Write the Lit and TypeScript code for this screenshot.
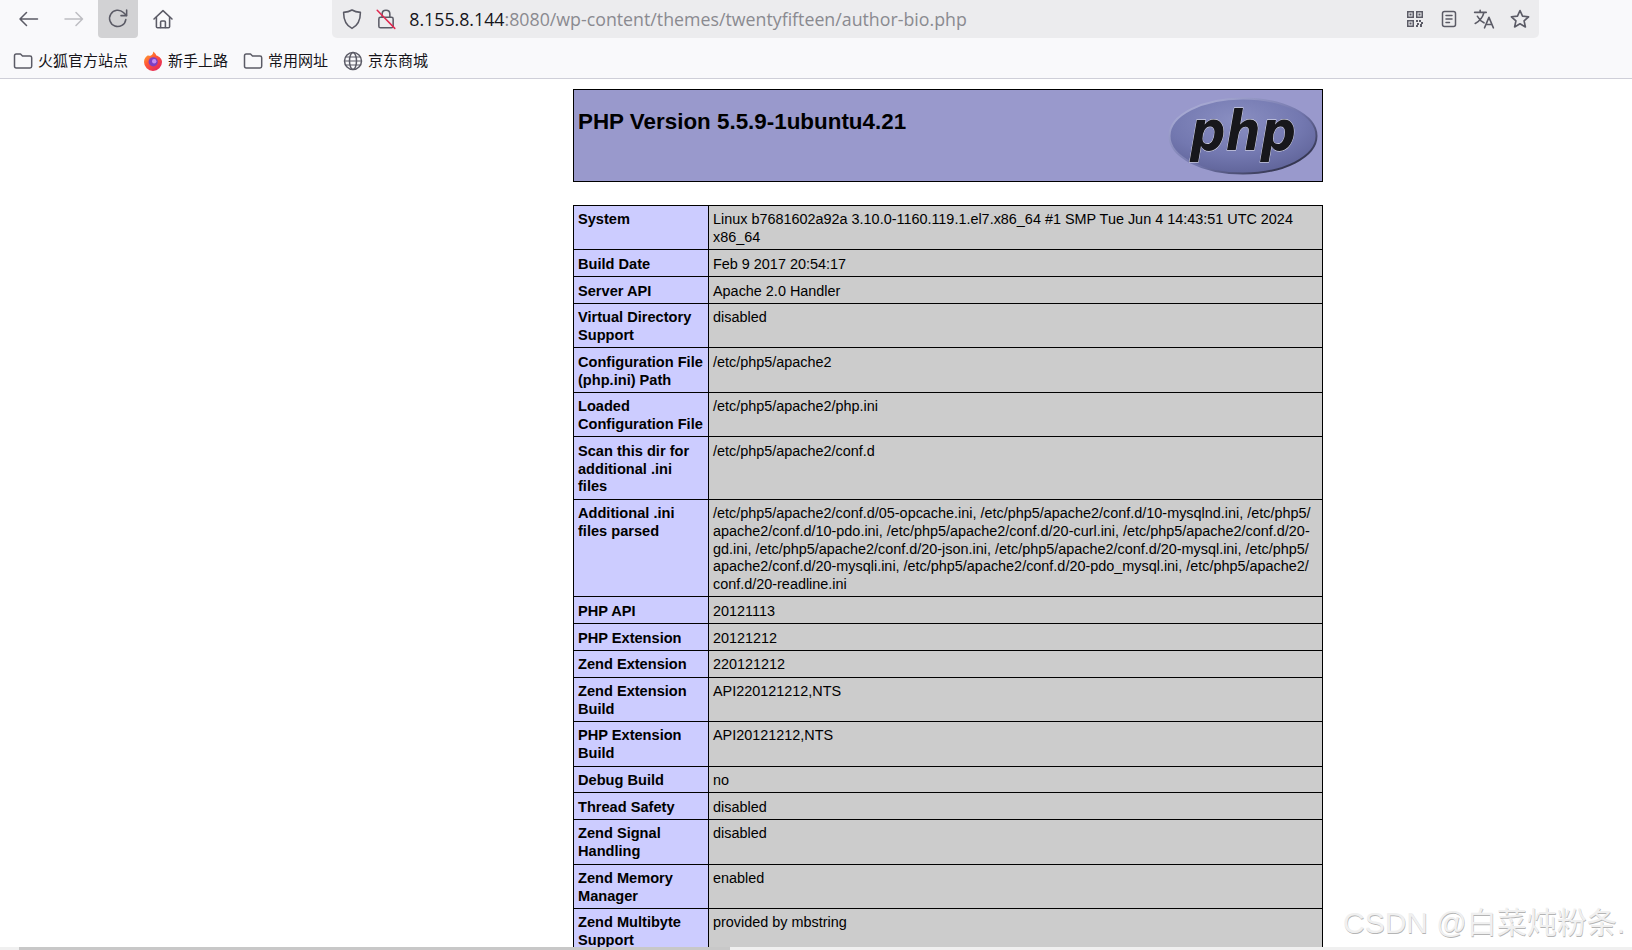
import { LitElement, html, css, svg } from "lit";
import { customElement } from "lit/decorators.js";

const rows: [string, string][] = [
  ["System", "Linux b7681602a92a 3.10.0-1160.119.1.el7.x86_64 #1 SMP Tue Jun 4 14:43:51 UTC 2024\nx86_64"],
  ["Build Date", "Feb 9 2017 20:54:17"],
  ["Server API", "Apache 2.0 Handler"],
  ["Virtual Directory Support", "disabled"],
  ["Configuration File (php.ini) Path", "/etc/php5/apache2"],
  ["Loaded Configuration File", "/etc/php5/apache2/php.ini"],
  ["Scan this dir for additional .ini files", "/etc/php5/apache2/conf.d"],
  ["Additional .ini files parsed", "/etc/php5/apache2/conf.d/05-opcache.ini, /etc/php5/apache2/conf.d/10-mysqlnd.ini, /etc/php5/\napache2/conf.d/10-pdo.ini, /etc/php5/apache2/conf.d/20-curl.ini, /etc/php5/apache2/conf.d/20-\ngd.ini, /etc/php5/apache2/conf.d/20-json.ini, /etc/php5/apache2/conf.d/20-mysql.ini, /etc/php5/\napache2/conf.d/20-mysqli.ini, /etc/php5/apache2/conf.d/20-pdo_mysql.ini, /etc/php5/apache2/\nconf.d/20-readline.ini"],
  ["PHP API", "20121113"],
  ["PHP Extension", "20121212"],
  ["Zend Extension", "220121212"],
  ["Zend Extension Build", "API220121212,NTS"],
  ["PHP Extension Build", "API20121212,NTS"],
  ["Debug Build", "no"],
  ["Thread Safety", "disabled"],
  ["Zend Signal Handling", "disabled"],
  ["Zend Memory Manager", "enabled"],
  ["Zend Multibyte Support", "provided by mbstring"],
];

const ic = (body: unknown, size = 20, sw = 1.5) => html`<svg class="ic" width=${size} height=${size} viewBox="0 0 20 20" fill="none" stroke="#5b5b66" stroke-width=${sw} stroke-linecap="round" stroke-linejoin="round">${body}</svg>`;
const folder = svg`<path d="M1.5 4.8C1.5 3.6 2.3 3 3.3 3H7.5L9.5 5H17C18 5 18.7 5.7 18.7 6.7V15.3C18.7 16.3 18 17 17 17H3.3C2.3 17 1.5 16.3 1.5 15.3Z"/>`;

@customElement("app-root")
export class AppRoot extends LitElement {
  static styles = css`
    :host { display: flex; flex-direction: column; width: 1632px; height: 950px; overflow: hidden; position: relative; background: #fff; font-family: "Liberation Sans", Arial, sans-serif; }
    .toolbar { flex: none; height: 38px; background: #f9f9fb; display: flex; align-items: center; padding-left: 9px; }
    .btn { flex: none; width: 40px; height: 38px; margin-right: 4.7px; display: flex; align-items: center; justify-content: center; border-radius: 0 0 4px 4px; }
    .btn.active { background: #d2d2d4; }
    .ic { display: block; flex: none; }
    .url { flex: none; margin-left: 144px; width: 1207px; height: 38px; background: #ececee; border-radius: 0 0 5px 5px; display: flex; align-items: center; position: relative; }
    .shield { margin-left: 8px; }
    .lock { margin-left: 11.5px; }
    .urltext { margin-left: 12px; font: 17.77px "Open Sans", "Noto Sans", sans-serif; color: #8a8a90; white-space: nowrap; }
    .urltext b { font-weight: 400; color: #15141a; }
    .actions { position: absolute; right: 8px; top: 0; height: 38px; display: flex; align-items: center; gap: 14px; }
    .bookmarks { flex: none; height: 41px; box-sizing: border-box; background: #f9f9fb; border-bottom: 1px solid #cfcfd8; display: flex; align-items: center; padding: 5px 0 0 13px; }
    .bm { display: flex; align-items: center; gap: 5px; margin-right: 15px; font: 15px "Noto Sans CJK SC", sans-serif; color: #15141a; white-space: nowrap; }
    .bm span { padding-bottom: 3px; }
    .page { flex: 1; min-height: 0; overflow: hidden; padding: 10px 0 0 573px; }
    .head { box-sizing: border-box; width: 750px; height: 93px; background: #9999cc; border: 1px solid #000; display: flex; justify-content: space-between; padding: 0 4px 0 4px; }
    h1 { margin: 0; padding-top: 18px; font: bold 22.4px/27px "Liberation Sans", Arial, sans-serif; color: #000; }
    .logo { margin-top: 5.5px; }
    table { border-collapse: collapse; width: 750px; table-layout: fixed; margin-top: 23px; font-size: 14.42px; line-height: 17.75px; color: #000; }
    col.c1 { width: 135px; }
    td { border: 1px solid #000; padding: 5.4px 4px 2.6px; vertical-align: top; background: #cccccc; white-space: pre-line; }
    td.e { background: #ccccff; font-weight: bold; font-size: 14.6px; }
    .scroll { flex: none; height: 3px; background: #f0f0f0; display: flex; }
    .scroll i { display: block; margin-left: 19px; width: 711px; background: #c8c8c8; }
    .wm { position: absolute; left: 1343px; top: 904px; font: 30px/38px "Liberation Sans", "Noto Sans CJK SC", sans-serif; color: #f0f0f0; text-shadow: 0.5px 0.5px 0.5px #b4b4b4; white-space: nowrap; }
  `;

  render() {
    return html`
      <div class="toolbar">
        <div class="btn">${ic(svg`<path d="M18.5 10H1M7.5 3.5L1 10L7.5 16.5"/>`)}</div>
        <div class="btn"><svg class="ic" width="20" height="20" viewBox="0 0 20 20" fill="none" stroke="#bdbdc2" stroke-width="1.5" stroke-linecap="round" stroke-linejoin="round"><path d="M1 10H18.5M12 3.5L18.5 10L12 16.5"/></svg></div>
        <div class="btn active">${ic(svg`<path d="M16.5 10.5A6.8 6.8 0 1 1 14.5 4.6L17 7"/><path d="M17.2 2.5V7.2H12.5"/>`, 24, 1.3)}</div>
        <div class="btn">${ic(svg`<path d="M2.5 10L10 3L17.5 10"/><path d="M4.5 8.5V16.5C4.5 17 5 17.3 5.5 17.3H14.5C15 17.3 15.5 17 15.5 16.5V8.5"/><path d="M8 17V12.5C8 12 8.4 11.7 9 11.7H11C11.6 11.7 12 12 12 12.5V17"/>`, 24, 1.3)}</div>
        <div class="url">
          <span class="shield">${ic(svg`<path d="M10 2.5C12 3.8 14.5 4.4 17 4.5C17 10 15.5 15 10 17.8C4.5 15 3 10 3 4.5C5.5 4.4 8 3.8 10 2.5Z"/>`, 24, 1.3)}</span>
          <span class="lock"><svg class="ic" width="22" height="22" viewBox="0 0 20 20" fill="none" stroke="#5b5b66" stroke-width="1.4" stroke-linecap="round"><rect x="3.5" y="8.5" width="13" height="9.5" rx="1.5"/><path d="M6.5 8.5V5.5C6.5 1 13.5 1 13.5 5.5V8.5"/><path d="M2 2L18 18.5" stroke="#e22850"/></svg></span>
          <span class="urltext"><b>8.155.8.144</b>:8080/wp-content/themes/twentyfifteen/author-bio.php</span>
          <div class="actions">
            <svg class="ic" width="20" height="20" viewBox="0 0 20 20" fill="#5b5b66"><path fill-rule="evenodd" d="M2 2H9V9H2ZM3.5 3.5V7.5H7.5V3.5ZM11 2H18V9H11ZM12.5 3.5V7.5H16.5V3.5ZM2 11H9V18H2ZM3.5 12.5V16.5H7.5V12.5Z"/><path d="M4.5 4.5H6.5V6.5H4.5ZM13.5 4.5H15.5V6.5H13.5ZM4.5 13.5H6.5V15.5H4.5ZM11 11H13V13H11ZM14 11H16V13H14ZM16 13H18V15H16ZM12 14H14V16H12ZM15 15H17V18H15ZM11 16H13V18H11Z"/></svg>
            ${ic(svg`<rect x="3.5" y="2.5" width="13" height="15" rx="2"/><path d="M7 6.5H13M7 10H13M7 13.5H10.5"/>`)}
            ${ic(svg`<path d="M1.5 4H12M6.5 2V4M10 4C9 8 6 12 2 14M4 7.5C5.5 10.5 8 12.5 10 13.5M10.5 18L14.5 8.5L18.5 18M12 15H17"/>`, 22)}
            ${ic(svg`<path d="M10 2.3L12.3 7.4L17.8 8L13.7 11.7L14.9 17.2L10 14.4L5.1 17.2L6.3 11.7L2.2 8L7.7 7.4Z"/>`, 22)}
          </div>
        </div>
      </div>
      <div class="bookmarks">
        <div class="bm">${ic(folder)}<span>火狐官方站点</span></div>
        <div class="bm"><svg class="ic" width="20" height="20" viewBox="0 0 20 20"><defs><linearGradient id="fx" x1="0" y1="0" x2="0.8" y2="1"><stop offset="0" stop-color="#ffbd2e"/><stop offset="0.45" stop-color="#ff5a36"/><stop offset="1" stop-color="#e3245e"/></linearGradient></defs><path d="M10 .5C12 2 13 3 13 4.3C16.5 5.5 19 8 19 11A9 9 0 0 1 1 11C1 8 2.6 5.5 5 4.3C6 5 7 5 8 4.5C9.5 3.5 10.5 2 10 .5Z" fill="url(#fx)"/><circle cx="10.2" cy="10.8" r="4.6" fill="#7c3fc4"/><circle cx="11.2" cy="10.2" r="2.2" fill="#c58cf0"/></svg><span>新手上路</span></div>
        <div class="bm">${ic(folder)}<span>常用网址</span></div>
        <div class="bm">${ic(svg`<circle cx="10" cy="10" r="8.5"/><ellipse cx="10" cy="10" rx="3.5" ry="8.5"/><path d="M1.5 10H18.5M3.2 6H16.8M3.2 14H16.8" stroke-width="1.2"/>`)}<span>京东商城</span></div>
      </div>
      <div class="page">
        <div class="head">
          <h1>PHP Version 5.5.9-1ubuntu4.21</h1>
          <svg class="logo" width="150" height="80" viewBox="0 0 150 80">
            <defs>
              <radialGradient id="el" cx="0.45" cy="0.3" r="0.75"><stop offset="0" stop-color="#8a8fc2"/><stop offset="0.6" stop-color="#7378b0"/><stop offset="1" stop-color="#5d6196"/></radialGradient>
              <linearGradient id="rim" x1="0" y1="0" x2="1" y2="1"><stop offset="0" stop-color="#b9bbe0"/><stop offset="0.55" stop-color="#7074aa"/><stop offset="1" stop-color="#1a1a28"/></linearGradient>
            </defs>
            <ellipse cx="75" cy="40" rx="73.5" ry="37.5" fill="url(#el)" stroke="url(#rim)" stroke-width="2"/>
            <text x="22" y="54" font-family="DejaVu Sans" font-weight="bold" font-style="italic" font-size="56" textLength="106" lengthAdjust="spacingAndGlyphs" fill="#17171b" stroke="#e8e8f0" stroke-width="0.8" paint-order="stroke">php</text>
          </svg>
        </div>
        <table>
          <colgroup><col class="c1" /><col /></colgroup>
          ${rows.map(([k, v]) => html`<tr><td class="e">${k}</td><td>${v}</td></tr>`)}
        </table>
      </div>
      <div class="scroll"><i></i></div>
      <div class="wm">CSDN @白菜炖粉条.</div>
    `;
  }
}
